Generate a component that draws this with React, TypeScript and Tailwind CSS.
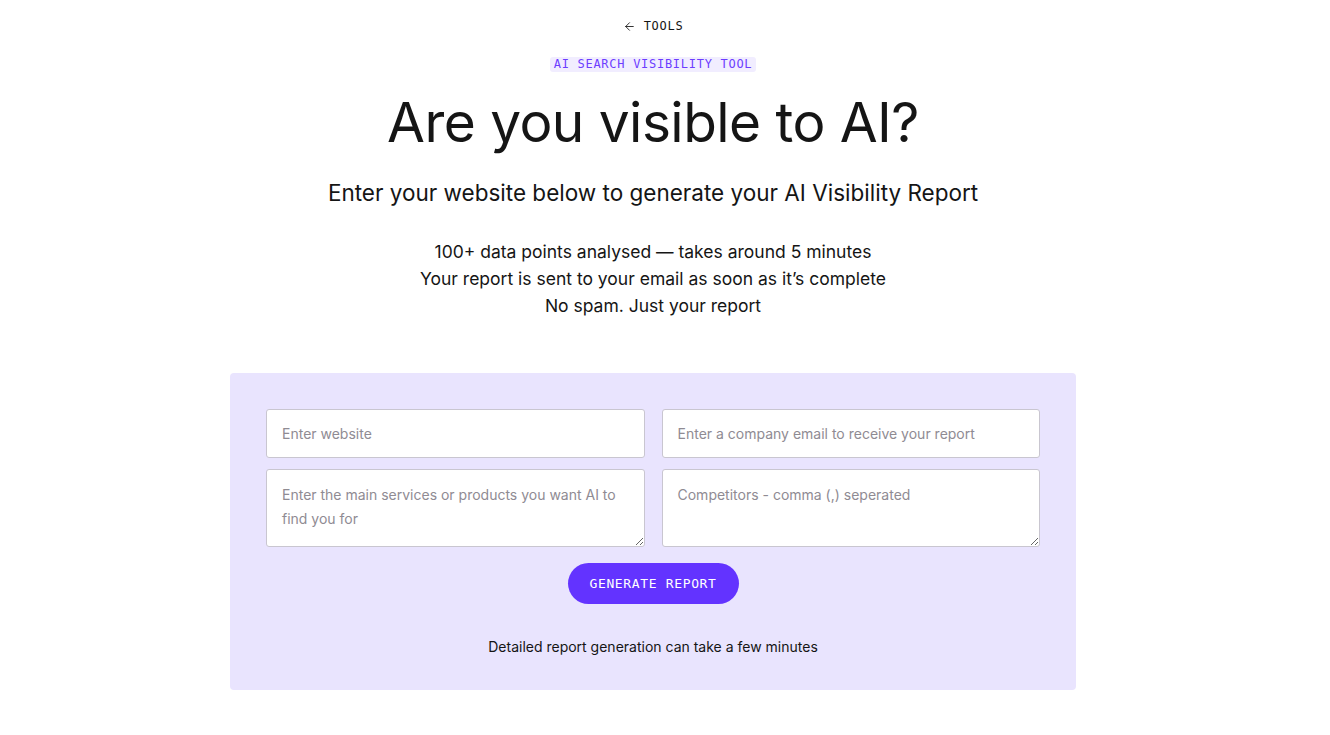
import { ArrowLeft } from "lucide-react";

const sans = "font-['Inter','Liberation_Sans',sans-serif]";
const mono = "font-['DejaVu_Sans_Mono','Liberation_Mono',monospace]";

const fieldBase =
  "w-full rounded-[3px] border border-[#c9c6d0] bg-white px-[15px] text-[14px] text-[#222] placeholder:text-[#8f8b93] outline-none";

export default function App() {
  return (
    <div className={`${sans} min-h-screen bg-white text-[#151515] pr-[24px] flex flex-col items-center`}>
      <a className={`${mono} mt-[17px] flex items-center gap-[8px] text-[12px] tracking-[0.06em] text-[#151515]`}>
        <ArrowLeft className="h-[13px] w-[13px]" strokeWidth={1.6} />
        TOOLS
      </a>

      <span
        className={`${mono} mt-[22px] rounded-[3px] bg-[#f1edff] px-[4px] text-[12px] leading-[15px] tracking-[0.06em] text-[#6d3dff]`}
      >
        AI SEARCH VISIBILITY TOOL
      </span>

      <h1 className="mt-[16px] text-[55px] leading-[68px] font-normal tracking-[-0.01em] text-[#151515]">
        Are you visible to AI?
      </h1>

      <p className="mt-[22px] text-[22.5px] leading-[30px] text-[#151515]">
        Enter your website below to generate your AI Visibility Report
      </p>

      <div className="mt-[30px] flex flex-col items-center text-[17.5px] leading-[27px] text-[#151515]">
        <p>100+ data points analysed — takes around 5 minutes</p>
        <p>Your report is sent to your email as soon as it’s complete</p>
        <p>No spam. Just your report</p>
      </div>

      <form
        className="mt-[54px] w-[846px] rounded-[4px] bg-[#e9e4fe] px-[36px] pt-[36px] pb-[33px] flex flex-col items-center"
        onSubmit={(e) => e.preventDefault()}
      >
        <div className="grid w-full grid-cols-2 gap-x-[17px] gap-y-[11px]">
          <input type="text" placeholder="Enter website" className={`${fieldBase} h-[49px]`} />
          <input
            type="email"
            placeholder="Enter a company email to receive your report"
            className={`${fieldBase} h-[49px]`}
          />
          <textarea
            placeholder="Enter the main services or products you want AI to find you for"
            className={`${fieldBase} h-[78px] py-[13px] leading-[24px]`}
          />
          <textarea
            placeholder="Competitors - comma (,) seperated"
            className={`${fieldBase} h-[78px] py-[13px] leading-[24px]`}
          />
        </div>

        <button
          type="submit"
          className={`${mono} mt-[16px] h-[41px] w-[171px] rounded-full bg-[#6333ff] text-[13px] tracking-[0.05em] text-white`}
        >
          GENERATE REPORT
        </button>

        <p className="mt-[33px] text-[14px] leading-[20px] text-[#151515]">
          Detailed report generation can take a few minutes
        </p>
      </form>
    </div>
  );
}
